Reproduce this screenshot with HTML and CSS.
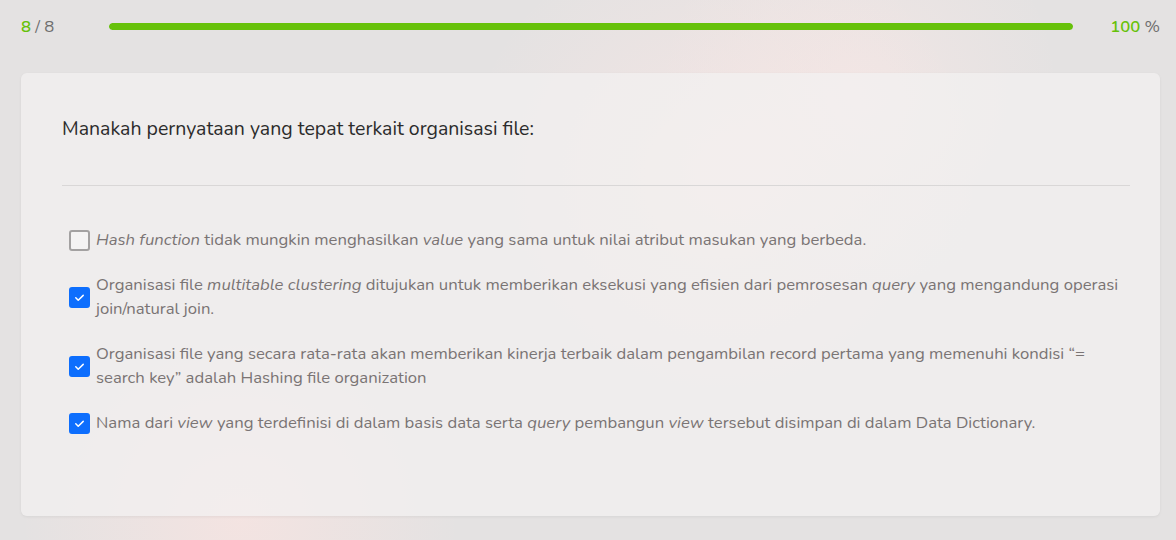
FILE: index.html
```html
<!DOCTYPE html>
<html lang="id">
<head>
    <meta charset="UTF-8">
    <meta name="viewport" content="width=device-width, initial-scale=1.0">
    <title>Kuis</title>
    <link rel="stylesheet" href="styles.css">
</head>
<body>
    <div class="progress-row">
        <div class="count"><span class="green">8</span> / 8</div>
        <div class="track"><div class="fill" style="width: 100%"></div></div>
        <div class="percent"><span class="green">100</span> %</div>
    </div>

    <div class="card">
        <div class="question">Manakah pernyataan yang tepat terkait organisasi file:</div>
        <hr class="divider">
        <div class="options">
            <label class="option">
                <span class="box"></span>
                <span class="text"><i>Hash function</i> tidak mungkin menghasilkan <i>value</i> yang sama untuk nilai atribut masukan yang berbeda.</span>
            </label>
            <label class="option">
                <span class="box checked"><svg viewBox="0 0 16 16"><path d="M4.5 8.3l2.3 2.3L11.5 6" /></svg></span>
                <span class="text">Organisasi file <i>multitable clustering</i> ditujukan untuk memberikan eksekusi yang efisien dari pemrosesan <i>query</i> yang mengandung operasi join/natural join.</span>
            </label>
            <label class="option">
                <span class="box checked"><svg viewBox="0 0 16 16"><path d="M4.5 8.3l2.3 2.3L11.5 6" /></svg></span>
                <span class="text">Organisasi file yang secara rata-rata akan memberikan kinerja terbaik dalam pengambilan record pertama yang memenuhi kondisi “= search key” adalah Hashing file organization</span>
            </label>
            <label class="option">
                <span class="box checked"><svg viewBox="0 0 16 16"><path d="M4.5 8.3l2.3 2.3L11.5 6" /></svg></span>
                <span class="text">Nama dari <i>view</i> yang terdefinisi di dalam basis data serta <i>query</i> pembangun <i>view</i> tersebut disimpan di dalam Data Dictionary.</span>
            </label>
        </div>
    </div>
</body>
</html>
```

FILE: styles.css
```css
body {
    margin: 0;
    font-family: "Nunito", "Open Sans", sans-serif;
    background-color: #e4e2e2;
    background-image:
        radial-gradient(circle at 720px 180px, rgba(250, 230, 228, 0.7), rgba(250, 230, 228, 0) 260px),
        radial-gradient(circle at 240px 520px, rgba(250, 228, 225, 0.7), rgba(250, 228, 225, 0) 220px),
        radial-gradient(circle at 860px 90px, rgba(248, 232, 230, 0.6), rgba(248, 232, 230, 0) 200px);
    height: 540px;
    overflow: hidden;
}
.green {
    color: #66c10a;
    font-weight: 600;
}
.progress-row {
    display: flex;
    align-items: center;
    height: 52px;
    padding: 0 16px 0 21px;
    font-size: 16.7px;
    color: #6e6e6e;
}
.count {
    width: 88px;
}
.track {
    flex: 1;
    height: 7px;
    border-radius: 4px;
    background: #dcdcdc;
    overflow: hidden;
}
.fill {
    height: 100%;
    background: #66c10a;
    border-radius: 4px;
}
.percent {
    width: 87px;
    text-align: right;
}
.card {
    margin: 21px 16px 0 21px;
    height: 443px;
    box-sizing: border-box;
    padding: 42px 30px 0 41px;
    border-radius: 6px;
    background-color: rgba(243, 241, 241, 0.72);
    box-shadow: 0 1px 3px rgba(0, 0, 0, 0.06);
}
.question {
    font-size: 19.5px;
    color: #2b2b2b;
    line-height: 28px;
}
.divider {
    border: none;
    border-top: 1px solid #d9d7d7;
    margin: 42px 0 0 0;
}
.options {
    display: flex;
    flex-direction: column;
    gap: 21px;
    padding: 42px 0 0 7px;
}
.option {
    display: flex;
    align-items: center;
    gap: 6px;
    font-size: 16.7px;
    line-height: 24px;
    color: #7a7474;
}
.box {
    flex: none;
    width: 17px;
    height: 17px;
    border: 2px solid #a3a1a1;
    border-radius: 3px;
    background: #f4f3f3;
}
.box.checked {
    border-color: #0d6efd;
    background: #0d6efd;
}
.box svg {
    display: block;
    width: 17px;
    height: 17px;
    fill: none;
    stroke: #ffffff;
    stroke-width: 1.4;
    stroke-linecap: round;
    stroke-linejoin: round;
}
```
